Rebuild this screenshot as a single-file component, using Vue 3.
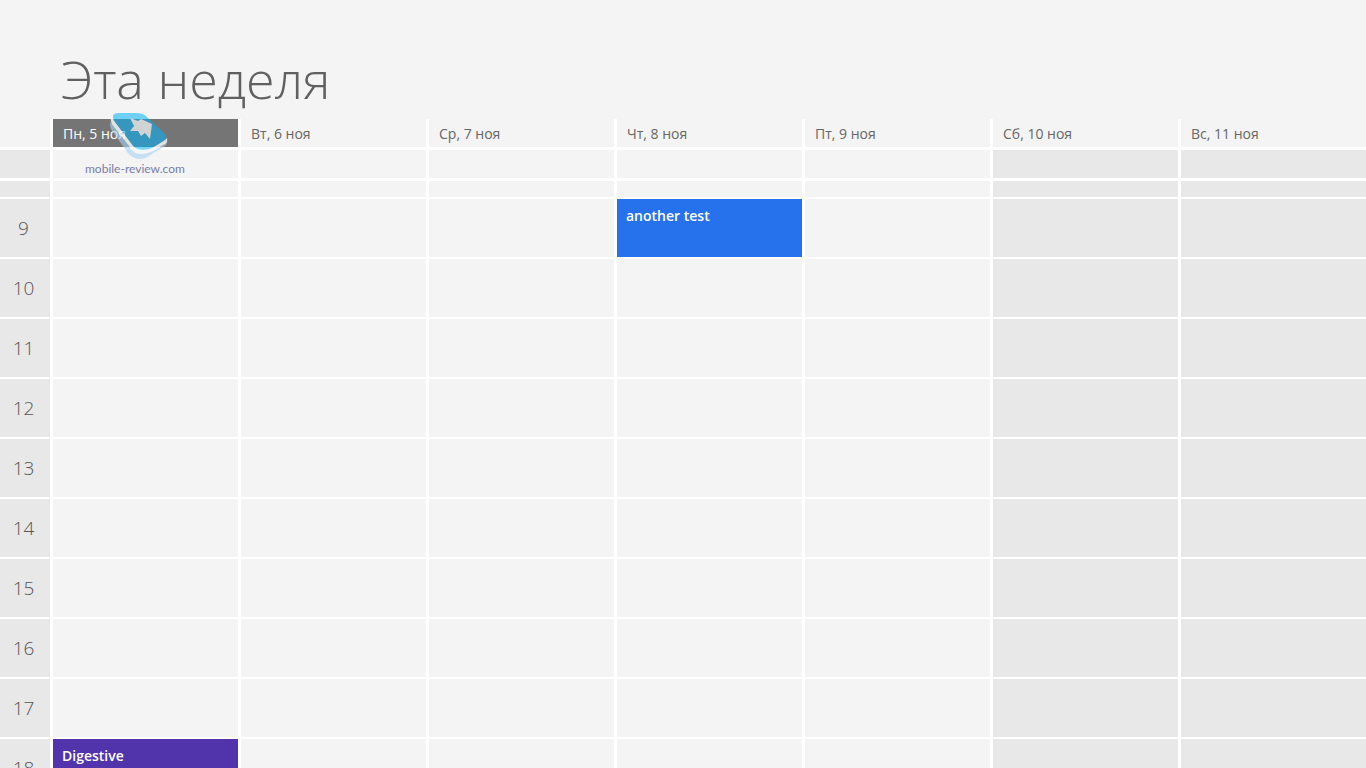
<script setup>
const days = [
  { label: 'Пн, 5 ноя', today: true },
  { label: 'Вт, 6 ноя' },
  { label: 'Ср, 7 ноя' },
  { label: 'Чт, 8 ноя' },
  { label: 'Пт, 9 ноя' },
  { label: 'Сб, 10 ноя', weekend: true },
  { label: 'Вс, 11 ноя', weekend: true },
]
const hours = [9, 10, 11, 12, 13, 14, 15, 16, 17, 18]
const events = [
  { day: 3, hour: 9, title: 'another test', kind: 'blue' },
  { day: 0, hour: 18, title: 'Digestive', kind: 'violet' },
]
const eventsAt = (day, hour) => events.filter((e) => e.day === day && e.hour === hour)
</script>

<template>
  <main class="calendar">
    <h1 class="title">Эта неделя</h1>
    <div class="board">
      <table class="week">
        <thead>
          <tr>
            <td class="corner"></td>
            <th v-for="d in days" :key="d.label" scope="col" class="day" :class="{ today: d.today }">{{ d.label }}</th>
          </tr>
        </thead>
        <tbody>
          <tr class="all-day">
            <td class="hour"></td>
            <td v-for="d in days" :key="d.label" :class="{ weekend: d.weekend }"></td>
          </tr>
          <tr class="partial">
            <td class="hour"></td>
            <td v-for="d in days" :key="d.label" :class="{ weekend: d.weekend }"></td>
          </tr>
          <tr v-for="h in hours" :key="h" class="slot">
            <th scope="row" class="hour">{{ h }}</th>
            <td v-for="(d, i) in days" :key="d.label" :class="{ weekend: d.weekend }">
              <div v-for="e in eventsAt(i, h)" :key="e.title" class="event" :class="e.kind">{{ e.title }}</div>
            </td>
          </tr>
        </tbody>
      </table>
      <div class="watermark">
        <svg class="mark" width="60" height="50" viewBox="0 0 60 50" aria-hidden="true">
          <path d="M2 9 Q0 13 2 17 L16 37 Q21 46 30 47 Q37 47 43 42 L56 34 Q58 33 58 29 L56 32 L44 39 Q38 42 31 42 Q24 41 20 34 L5 15 Q2 12 2 9Z" fill="#a5d2f3" opacity=".6" />
          <path d="M4 4 Q1 6 2 9 Q2 12 5 15 L20 34 Q24 41 31 42 Q38 42 44 39 L56 32 Q59 30 58 26 L56 28 L43 36 Q36 39 29 37 Q25 36 22 31 L6 10 Q4 8 4 4Z" fill="#f4f6f8" opacity=".85" />
          <path d="M4 6 Q3 1 10 1 L27 1 Q34 1 38 5 L55 21 Q59 25 56 28 L43 36 Q36 39 29 37 Q25 36 22 31 L6 10Z" fill="#00b1fa" opacity=".55" />
          <path d="M21 6 L29 9 L32 7 L43 12 L41 27 L36 21 L32 24 L29 19 L21 19 L25 14Z" fill="#d0d2d4" />
        </svg>
        <span class="site">mobile-review.com</span>
      </div>
    </div>
  </main>
</template>

<style>
body {
  margin: 0;
  background: #f4f4f4;
}
</style>

<style scoped>
.calendar {
  height: 100vh;
  overflow: hidden;
  display: flex;
  flex-direction: column;
  background: #f4f4f4;
  color: #666;
  font-family: "Open Sans", "Noto Sans", sans-serif;
}
.title {
  margin: 0;
  padding: 43px 0 4px 61px;
  font-size: 52px;
  line-height: 72px;
  font-weight: 300;
  color: #606060;
}
.board {
  position: relative;
}
.week {
  width: 100%;
  table-layout: fixed;
  border-collapse: separate;
  border-spacing: 0;
}
.week td,
.week th {
  box-sizing: border-box;
  padding: 0;
  border: 0 solid #fff;
  border-width: 0 0 2px 3px;
  font-weight: 400;
  text-align: left;
  vertical-align: top;
}
.week .corner,
.week .hour {
  width: 50px;
  border-left-width: 0;
}
.week .corner,
.week .day,
.week .all-day td {
  height: 31px;
  border-bottom-width: 3px;
}
.week .day {
  padding: 2px 10px 0;
  font-size: 14px;
  line-height: 26px;
}
.week .today {
  background: #757575;
  color: #fff;
}
.partial td {
  height: 18px;
}
.slot td,
.slot th {
  height: 60px;
}
.week .hour {
  background: #e8e8e8;
}
.week th.hour {
  padding: 0 3px 0 0;
  font-size: 19px;
  line-height: 58px;
  font-weight: 300;
  text-align: center;
  color: #555;
}
.week .weekend {
  background: #e8e8e8;
}
.event {
  box-sizing: border-box;
  height: 58px;
  padding: 6px 9px;
  font-size: 14px;
  line-height: 22px;
  font-weight: 600;
  color: #fff;
}
.blue {
  background: #2671ec;
}
.violet {
  background: #5133ab;
}
.watermark {
  position: absolute;
  top: -7px;
  left: 85px;
  display: flex;
  flex-direction: column;
}
.mark {
  margin-left: 24px;
}
.site {
  font-family: Lato, sans-serif;
  font-size: 12px;
  line-height: 14px;
  color: #777daa;
}
</style>
